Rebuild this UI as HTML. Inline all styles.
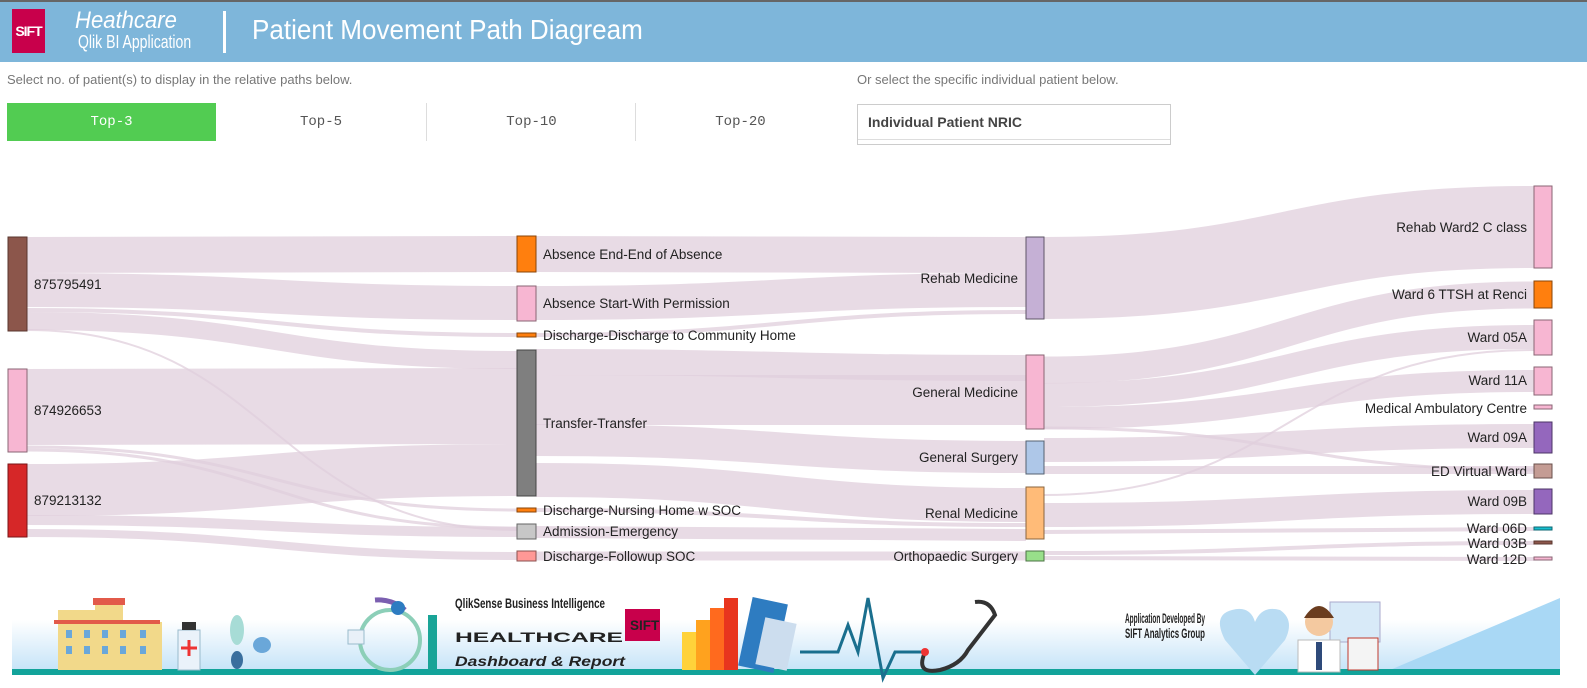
<!DOCTYPE html>
<html><head><meta charset="utf-8"><style>
body{margin:0;width:1587px;height:688px;overflow:hidden;background:#fff;font-family:"Liberation Sans",sans-serif;position:relative}
.hdr{position:absolute;left:0;top:0;width:1587px;height:60px;background:#7eb6da;border-top:2px solid #666}
.abs{position:absolute}
.btn{position:absolute;top:103px;height:38px;line-height:38px;text-align:center;font-family:"Liberation Mono",monospace;font-size:14px;color:#555}
svg text{font-family:"Liberation Sans",sans-serif;font-size:13.5px;fill:#222}
</style></head><body>
<div class="hdr">
 <div class="abs" style="left:12px;top:7px;width:33px;height:44px;background:#c8004b;color:#fff;font-weight:bold;font-size:14px;line-height:44px;text-align:center;letter-spacing:-1px">SIFT</div>
 <div class="abs" style="left:75px;top:7px;color:#fff;font-style:italic;font-size:24px;line-height:24px;transform:scaleX(.92);transform-origin:left">Heathcare</div>
 <div class="abs" style="left:78px;top:31px;color:#fff;font-size:18px;line-height:18px;transform:scaleX(.78);transform-origin:left">Qlik BI Application</div>
 <div class="abs" style="left:223px;top:9px;width:3px;height:42px;background:#fff"></div>
 <div class="abs" style="left:252px;top:12px;color:#fff;font-size:28px;transform:scaleX(.93);transform-origin:left">Patient Movement Path Diagream</div>
</div>
<div class="abs" style="left:7px;top:72px;font-size:13px;color:#777">Select no. of patient(s) to display in the relative paths below.</div>
<div class="abs" style="left:857px;top:72px;font-size:13px;color:#777">Or select the specific individual patient below.</div>
<div class="btn" style="left:7px;width:209px;background:#52cc52;color:#fff">Top-3</div>
<div class="btn" style="left:216px;width:210px">Top-5</div>
<div class="btn" style="left:426px;width:209px;border-left:1px solid #ddd">Top-10</div>
<div class="btn" style="left:635px;width:209px;border-left:1px solid #ddd">Top-20</div>
<div class="abs" style="left:857px;top:104px;width:314px;height:41px;border:1px solid #ccc;box-sizing:border-box">
 <div style="padding:9px 10px;font-weight:bold;font-size:14px;color:#444;border-bottom:1px solid #ddd">Individual Patient NRIC</div></div>

<svg class="abs" style="left:0;top:0" width="1587" height="580">
<g fill="none" stroke="#e0cfdc" stroke-opacity=".75">
<path d="M27 255 C272 255 272 254 517 254" stroke-width="36"/>
<path d="M27 290 C272 290 272 303 517 303" stroke-width="34"/>
<path d="M27 310 C272 310 272 335 517 335" stroke-width="4"/>
<path d="M27 321 C272 321 272 360 517 360" stroke-width="18"/>
<path d="M27 330 C272 330 272 530 517 530" stroke-width="2"/>
<path d="M27 407 C272 407 272 406 517 406" stroke-width="76"/>
<path d="M27 447 C272 447 272 510 517 510" stroke-width="3"/>
<path d="M27 450 C272 450 272 528 517 528" stroke-width="3"/>
<path d="M27 490 C272 490 272 470 517 470" stroke-width="52"/>
<path d="M27 520 C272 520 272 532 517 532" stroke-width="10"/>
<path d="M27 533 C272 533 272 556 517 556" stroke-width="8"/>
<path d="M536 254 C781 254 781 255 1026 255" stroke-width="36"/>
<path d="M536 303 C781 303 781 290 1026 290" stroke-width="34"/>
<path d="M536 335 C781 335 781 312 1026 312" stroke-width="4"/>
<path d="M536 362 C781 362 781 368 1026 368" stroke-width="26"/>
<path d="M536 400 C781 400 781 400 1026 400" stroke-width="50"/>
<path d="M536 440 C781 440 781 457 1026 457" stroke-width="32"/>
<path d="M536 480 C781 480 781 505 1026 505" stroke-width="34"/>
<path d="M536 510 C781 510 781 525 1026 525" stroke-width="4"/>
<path d="M536 532 C781 532 781 535 1026 535" stroke-width="12"/>
<path d="M536 556 C781 556 781 556 1026 556" stroke-width="9"/>
<path d="M1044 278 C1289 278 1289 227 1534 227" stroke-width="82"/>
<path d="M1044 370 C1289 370 1289 295 1534 295" stroke-width="27"/>
<path d="M1044 395 C1289 395 1289 337 1534 337" stroke-width="24"/>
<path d="M1044 418 C1289 418 1289 381 1534 381" stroke-width="22"/>
<path d="M1044 428 C1289 428 1289 470 1534 470" stroke-width="3"/>
<path d="M1044 450 C1289 450 1289 436 1534 436" stroke-width="24"/>
<path d="M1044 470 C1289 470 1289 470 1534 470" stroke-width="8"/>
<path d="M1044 495 C1289 495 1289 350 1534 350" stroke-width="2"/>
<path d="M1044 515 C1289 515 1289 502 1534 502" stroke-width="24"/>
<path d="M1044 532 C1289 532 1289 529 1534 529" stroke-width="4"/>
<path d="M1044 553 C1289 553 1289 543 1534 543" stroke-width="4"/>
<path d="M1044 558 C1289 558 1289 559 1534 559" stroke-width="4"/>
</g>
<g stroke-width="1">
<rect x="8" y="237" width="19" height="94" fill="#8c564b" stroke="#5a372f"/>
<rect x="8" y="369" width="19" height="83" fill="#f7b6d2" stroke="#8a6674"/>
<rect x="8" y="464" width="19" height="73" fill="#d62728" stroke="#7a1617"/>
<rect x="517" y="236" width="19" height="36" fill="#ff7f0e" stroke="#8a4508"/>
<rect x="517" y="286" width="19" height="35" fill="#f7b6d2" stroke="#8a6674"/>
<rect x="517" y="333" width="19" height="4" fill="#ff7f0e" stroke="#8a4508"/>
<rect x="517" y="350" width="19" height="146" fill="#7f7f7f" stroke="#444"/>
<rect x="517" y="508" width="19" height="4" fill="#ff7f0e" stroke="#8a4508"/>
<rect x="517" y="524" width="19" height="15" fill="#c7c7c7" stroke="#666"/>
<rect x="517" y="551" width="19" height="10" fill="#ff9896" stroke="#8a5250"/>
<rect x="1026" y="237" width="18" height="82" fill="#c5b0d5" stroke="#5e5466"/>
<rect x="1026" y="355" width="18" height="74" fill="#f7b6d2" stroke="#8a6674"/>
<rect x="1026" y="441" width="18" height="33" fill="#aec7e8" stroke="#556070"/>
<rect x="1026" y="487" width="18" height="52" fill="#ffbb78" stroke="#8a653f"/>
<rect x="1026" y="551" width="18" height="10" fill="#98df8a" stroke="#4d7345"/>
<rect x="1534" y="186" width="18" height="82" fill="#f7b6d2" stroke="#8a6674"/>
<rect x="1534" y="281" width="18" height="27" fill="#ff7f0e" stroke="#8a4508"/>
<rect x="1534" y="320" width="18" height="35" fill="#f7b6d2" stroke="#8a6674"/>
<rect x="1534" y="367" width="18" height="28" fill="#f7b6d2" stroke="#8a6674"/>
<rect x="1534" y="405" width="18" height="4" fill="#f7b6d2" stroke="#8a6674"/>
<rect x="1534" y="422" width="18" height="31" fill="#9467bd" stroke="#4d3566"/>
<rect x="1534" y="464" width="18" height="14" fill="#c49c94" stroke="#6a504c"/>
<rect x="1534" y="489" width="18" height="25" fill="#9467bd" stroke="#4d3566"/>
<rect x="1534" y="527" width="18" height="3" fill="#17becf" stroke="#0d6670"/>
<rect x="1534" y="541" width="18" height="3" fill="#8c564b" stroke="#5a372f"/>
<rect x="1534" y="557" width="18" height="3" fill="#f7b6d2" stroke="#8a6674"/>
</g>
<text x="34" y="289">875795491</text>
<text x="34" y="415">874926653</text>
<text x="34" y="505">879213132</text>
<text x="543" y="259">Absence End-End of Absence</text>
<text x="543" y="308">Absence Start-With Permission</text>
<text x="543" y="340">Discharge-Discharge to Community Home</text>
<text x="543" y="428">Transfer-Transfer</text>
<text x="543" y="515">Discharge-Nursing Home w SOC</text>
<text x="543" y="536">Admission-Emergency</text>
<text x="543" y="561">Discharge-Followup SOC</text>
<g text-anchor="end">
<text x="1018" y="283">Rehab Medicine</text>
<text x="1018" y="397">General Medicine</text>
<text x="1018" y="462">General Surgery</text>
<text x="1018" y="518">Renal Medicine</text>
<text x="1018" y="561">Orthopaedic Surgery</text>
<text x="1527" y="232">Rehab Ward2 C class</text>
<text x="1527" y="299">Ward 6 TTSH at Renci</text>
<text x="1527" y="342">Ward 05A</text>
<text x="1527" y="385">Ward 11A</text>
<text x="1527" y="413">Medical Ambulatory Centre</text>
<text x="1527" y="442">Ward 09A</text>
<text x="1527" y="476">ED Virtual Ward</text>
<text x="1527" y="506">Ward 09B</text>
<text x="1527" y="533">Ward 06D</text>
<text x="1527" y="548">Ward 03B</text>
<text x="1527" y="564">Ward 12D</text>
</g>
</svg>

<svg class="abs" style="left:0;top:580px" width="1587" height="108">
<defs><linearGradient id="g" x1="0" y1="0" x2="0" y2="1"><stop offset="0" stop-color="#fff"/><stop offset="1" stop-color="#c6e4f8"/></linearGradient></defs>
<rect x="12" y="40" width="1548" height="50" fill="url(#g)"/>
<polygon points="1390,90 1560,18 1560,90" fill="#a9d8f5"/>
<rect x="12" y="89" width="1548" height="6" fill="#12a39a"/>
<!-- hospital -->
<rect x="58" y="30" width="50" height="60" fill="#f2d98a"/><rect x="95" y="22" width="28" height="68" fill="#f2d98a"/>
<rect x="93" y="18" width="32" height="7" fill="#e25a4a"/><rect x="120" y="42" width="42" height="48" fill="#f2d98a"/>
<rect x="54" y="40" width="106" height="4" fill="#e25a4a"/>
<g fill="#6aa7d9"><rect x="66" y="50" width="6" height="8"/><rect x="84" y="50" width="6" height="8"/><rect x="102" y="50" width="6" height="8"/><rect x="120" y="50" width="6" height="8"/><rect x="140" y="50" width="6" height="8"/><rect x="66" y="66" width="6" height="8"/><rect x="84" y="66" width="6" height="8"/><rect x="102" y="66" width="6" height="8"/><rect x="120" y="66" width="6" height="8"/><rect x="140" y="66" width="6" height="8"/></g>
<rect x="178" y="50" width="22" height="40" fill="#eaf2fa" stroke="#9bc"/><rect x="182" y="42" width="14" height="8" fill="#333"/><path d="M189 60 v16 M181 68 h16" stroke="#e33" stroke-width="3"/>
<ellipse cx="237" cy="50" rx="7" ry="15" fill="#a7dcd6"/><ellipse cx="262" cy="65" rx="9" ry="8" fill="#6aa7d9"/><ellipse cx="237" cy="80" rx="6" ry="9" fill="#3a6f9e"/>
<!-- brain icon -->
<circle cx="390" cy="60" r="30" fill="none" stroke="#8ccfb8" stroke-width="4"/><path d="M375 20 a40 40 0 0 1 30 10" stroke="#7b5fb0" stroke-width="5" fill="none"/>
<circle cx="398" cy="28" r="7" fill="#2e7cc1"/><rect x="428" y="35" width="9" height="55" fill="#19a497"/>
<rect x="348" y="50" width="16" height="14" fill="#e8f0f8" stroke="#9bc"/>
<text x="455" y="28" font-family="Liberation Sans" font-size="11" font-weight="bold" fill="#222" textLength="150" lengthAdjust="spacingAndGlyphs">QlikSense Business Intelligence</text>
<text x="455" y="62" font-family="Liberation Sans" font-size="34" font-weight="bold" fill="#222" textLength="168" lengthAdjust="spacingAndGlyphs">HEALTHCARE</text>
<rect x="625" y="29" width="35" height="32" fill="#c8004b"/><text x="630" y="50" font-family="Liberation Sans" font-size="13" font-weight="bold" fill="#fff">SIFT</text>
<text x="455" y="86" font-family="Liberation Serif" font-style="italic" font-weight="bold" font-size="22" fill="#222" textLength="170" lengthAdjust="spacingAndGlyphs">Dashboard &amp; Report</text>
<!-- chart -->
<rect x="682" y="52" width="14" height="38" fill="#ffd23a"/><rect x="696" y="40" width="14" height="50" fill="#ffa21e"/><rect x="710" y="28" width="14" height="62" fill="#ff6a1e"/><rect x="724" y="18" width="14" height="72" fill="#e8351e"/>
<rect x="745" y="20" width="36" height="70" fill="#2e7cc1" transform="rotate(12 763 55)"/>
<rect x="760" y="40" width="32" height="48" fill="#cde" transform="rotate(12 776 64)"/>
<polyline points="800,72 838,72 848,45 858,72 868,18 883,98 895,72 925,72" fill="none" stroke="#1a6f8e" stroke-width="3"/>
<path d="M925 72 Q 915 95 940 90 Q 960 85 968 70 L 995 35 Q 990 20 975 22" fill="none" stroke="#333" stroke-width="4"/>
<circle cx="925" cy="72" r="4" fill="#e33"/>
<text x="1125" y="43" font-family="Liberation Sans" font-size="7" font-weight="bold" fill="#333" textLength="80" lengthAdjust="spacingAndGlyphs">Application Developed By</text>
<text x="1125" y="58" font-family="Liberation Sans" font-size="10" font-weight="bold" fill="#333" textLength="80" lengthAdjust="spacingAndGlyphs">SIFT Analytics Group</text>
<path d="M1255 95 L1225 60 Q1212 35 1232 30 Q1250 25 1255 42 Q1262 25 1280 30 Q1295 40 1285 60Z" fill="#b9dcf3"/>
<rect x="1330" y="22" width="50" height="40" fill="#d8eaf8" stroke="#aac"/>
<rect x="1298" y="60" width="42" height="32" fill="#fff" stroke="#bbb"/><rect x="1316" y="62" width="6" height="28" fill="#2e4a7a"/>
<circle cx="1319" cy="42" r="14" fill="#f4c9a0"/><path d="M1304 38 Q1319 14 1334 38" fill="#6b3d1f"/>
<rect x="1348" y="58" width="30" height="32" fill="#f4f4f4" stroke="#c0392b"/>
</svg>
</body></html>
